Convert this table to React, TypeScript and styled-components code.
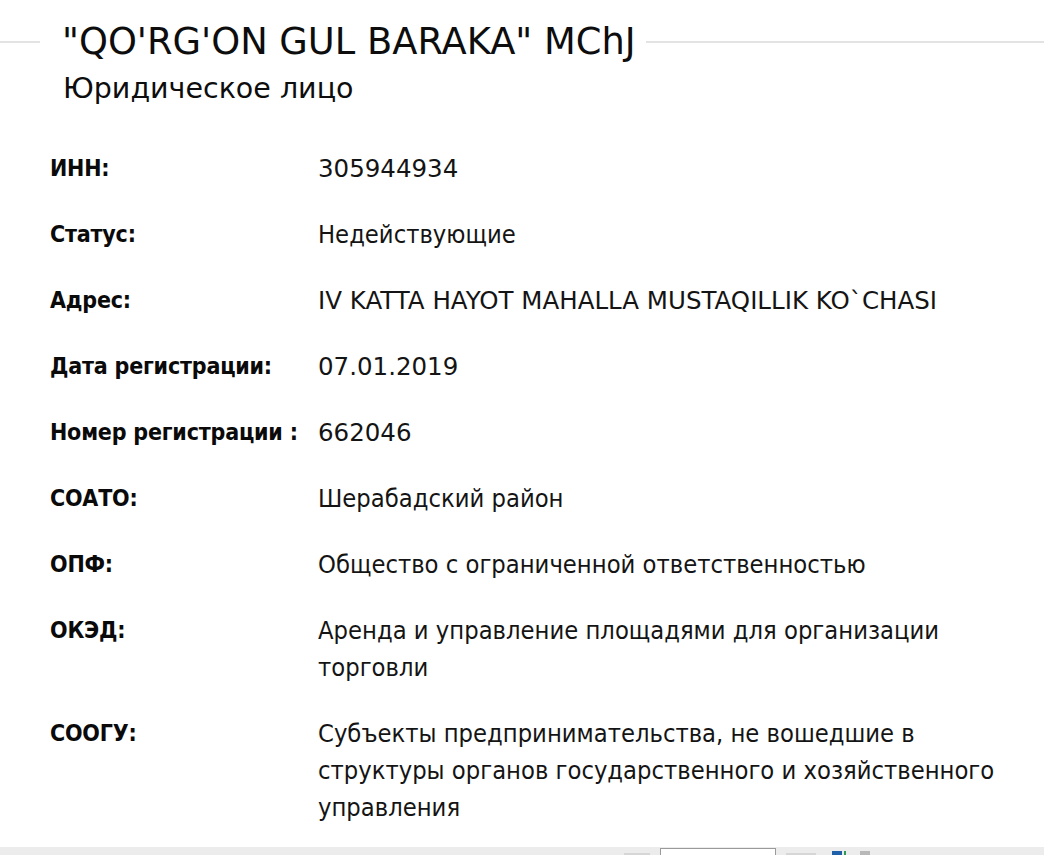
import React from "react";
import styled, { createGlobalStyle } from "styled-components";

const Global = createGlobalStyle`
  html, body { margin: 0; padding: 0; background: #fff; }
  body { font-family: "DejaVu Sans", sans-serif; color: #111; overflow: hidden; }
`;

const Page = styled.div`
  width: 1044px;
  height: 855px;
  display: flex;
  flex-direction: column;
  overflow: hidden;
`;

const Main = styled.div`
  flex: 1;
  display: flex;
  flex-direction: column;
  min-height: 0;
`;

const Legend = styled.div`
  display: flex;
  align-items: center;
  margin-top: 20px;
  gap: 10px;
`;

const Rule = styled.div<{ $w?: number }>`
  height: 2px;
  background: #e3e3e3;
  ${(p) => (p.$w ? `width: ${p.$w}px; flex: none;` : `flex: 1;`)}
`;

const Title = styled.h1`
  margin: 0 0 0 12px;
  font-family: "DejaVu Sans", sans-serif;
  font-weight: 400;
  font-size: 36.8px;
  line-height: 44px;
  white-space: nowrap;
  color: #0d0d0d;
`;

const Subtitle = styled.div`
  margin: 7px 0 0 63px;
  font-family: "DejaVu Sans", sans-serif;
  font-size: 28.5px;
  line-height: 36px;
  color: #0d0d0d;
`;

const Grid = styled.dl`
  margin: 43px 0 0 50px;
  display: grid;
  grid-template-columns: 268px 700px;
  row-gap: 29px;
`;

const Label = styled.dt`
  font-family: "DejaVu Sans Condensed", "DejaVu Sans", sans-serif;
  font-weight: 700;
  font-size: 23px;
  line-height: 37px;
  letter-spacing: -0.2px;
  color: #0a0a0a;
  white-space: nowrap;
`;

const Value = styled.dd<{ $cyr?: boolean }>`
  margin: 0;
  font-family: ${(p) =>
    p.$cyr ? `"DejaVu Sans Condensed", "DejaVu Sans"` : `"DejaVu Sans"`}, sans-serif;
  font-size: ${(p) => (p.$cyr ? 25.3 : 24.5)}px;
  line-height: 37px;
  color: #141414;
`;

const Bottom = styled.div`
  height: 8px;
  flex: none;
  background: #ececec;
  display: flex;
  align-items: flex-start;
  padding-left: 624px;
  padding-top: 1px;
  gap: 10px;
  box-sizing: border-box;
  overflow: hidden;
`;

const Faint = styled.div<{ $w: number }>`
  width: ${(p) => p.$w}px;
  height: 3px;
  margin-top: 5px;
  background: #d6d6d6;
`;

const Input = styled.div`
  width: 116px;
  height: 12px;
  border: 1px solid #9a9a9a;
  background: #fff;
  box-sizing: border-box;
`;

const Icons = styled.div`
  display: flex;
  gap: 2px;
  padding-top: 3px;
  margin-left: 6px;
`;

const Sq = styled.div<{ $c: string; $w?: number; $ml?: number }>`
  width: ${(p) => p.$w ?? 10}px;
  height: 8px;
  margin-left: ${(p) => p.$ml ?? 0}px;
  background: ${(p) => p.$c};
`;

const rows: [string, string, boolean][] = [
  ["ИНН:", "305944934", false],
  ["Статус:", "Недействующие", true],
  ["Адрес:", "IV KATTA HAYOT MAHALLA MUSTAQILLIK KO`CHASI", false],
  ["Дата регистрации:", "07.01.2019", false],
  ["Номер регистрации :", "662046", false],
  ["СОАТО:", "Шерабадский район", true],
  ["ОПФ:", "Общество с ограниченной ответственностью", true],
  ["ОКЭД:", "Аренда и управление площадями для организации торговли", true],
  [
    "СООГУ:",
    "Субъекты предпринимательства, не вошедшие в структуры органов государственного и хозяйственного управления",
    true,
  ],
];

export default function App() {
  return (
    <Page>
      <Global />
      <Main>
        <Legend>
          <Rule $w={40} />
          <Title>"QO'RG'ON GUL BARAKA" MChJ</Title>
          <Rule />
        </Legend>
        <Subtitle>Юридическое лицо</Subtitle>
        <Grid>
          {rows.map(([l, v, c]) => (
            <React.Fragment key={l}>
              <Label>{l}</Label>
              <Value $cyr={c}>{v}</Value>
            </React.Fragment>
          ))}
        </Grid>
      </Main>
      <Bottom>
        <Faint $w={26} />
        <Input />
        <Faint $w={30} />
        <Icons>
          <Sq $c="#1d5fa8" />
          <Sq $c="#2e9a5a" $w={2} />
          <Sq $c="#b8b8b8" $ml={12} />
        </Icons>
      </Bottom>
    </Page>
  );
}
